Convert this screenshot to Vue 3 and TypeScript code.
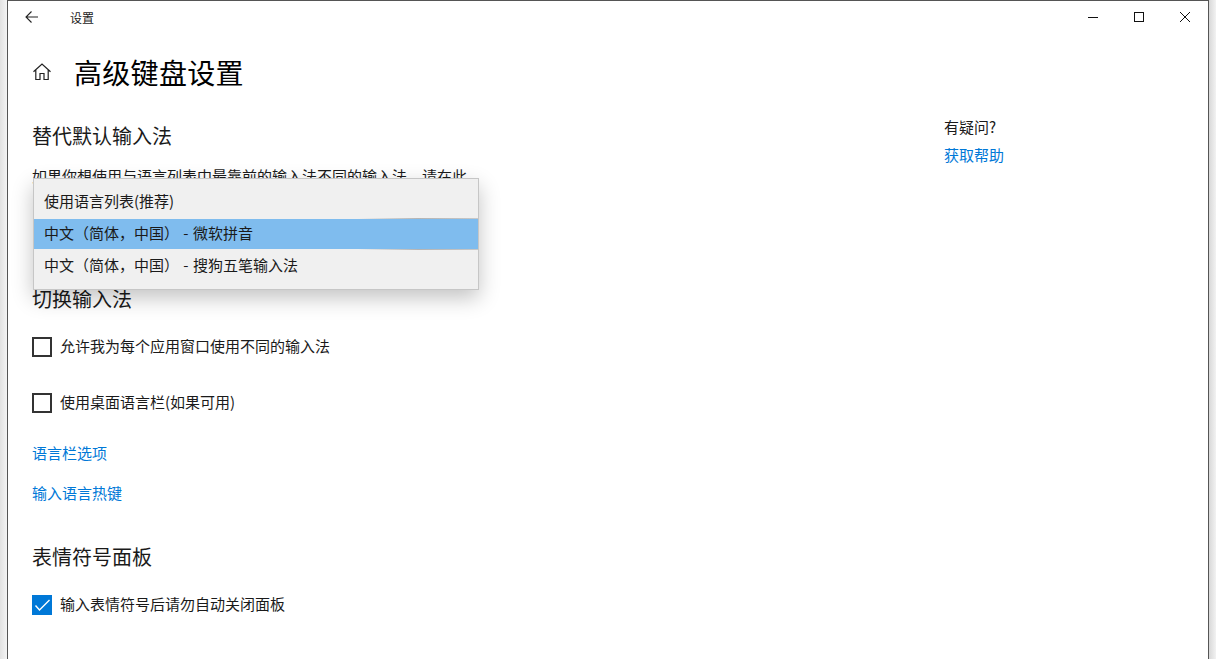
<script setup lang="ts">
const menuItems = [
  { label: '使用语言列表(推荐)', selected: false },
  { label: '中文（简体，中国） - 微软拼音', selected: true },
  { label: '中文（简体，中国） - 搜狗五笔输入法', selected: false },
];
</script>

<template>
  <div class="desktop">
    <div class="window">
      <header class="titlebar">
        <svg class="back" width="16" height="14" viewBox="0 0 16 14" fill="none" stroke="#222" stroke-width="1.1">
          <path d="M14 7H2M7.5 1.5 2 7l5.5 5.5" />
        </svg>
        <span class="titlebar__text">设置</span>
        <div class="controls">
          <svg width="46" height="34" viewBox="0 0 46 34" stroke="#111" fill="none"><path d="M18 16.5h10" /></svg>
          <svg width="46" height="34" viewBox="0 0 46 34" stroke="#111" fill="none"><rect x="18.5" y="11.5" width="9" height="9" /></svg>
          <svg width="46" height="34" viewBox="0 0 46 34" stroke="#111" fill="none"><path d="M18 11 28 21M28 11 18 21" /></svg>
        </div>
      </header>

      <div class="page-head">
        <svg class="home" width="20" height="20" viewBox="0 0 20 20" fill="none" stroke="#222" stroke-width="1.2">
          <path d="M1.5 9.8 10 2l8.5 7.8M3.8 8v9.5h4.2v-6h4v6h4.2V8" />
        </svg>
        <h1>高级键盘设置</h1>
      </div>

      <div class="columns">
        <main class="content">
          <h2>替代默认输入法</h2>
          <p class="desc">如果你想使用与语言列表中最靠前的输入法不同的输入法，请在此</p>
          <div class="select-spacer"></div>

          <h2 class="switch-title">切换输入法</h2>
          <label class="check">
            <span class="box"></span>
            <span class="check__text">允许我为每个应用窗口使用不同的输入法</span>
          </label>
          <label class="check check--second">
            <span class="box"></span>
            <span class="check__text">使用桌面语言栏(如果可用)</span>
          </label>
          <a class="link link--first">语言栏选项</a>
          <a class="link link--second">输入语言热键</a>

          <h2 class="emoji-title">表情符号面板</h2>
          <label class="check check--last">
            <span class="box box--on">
              <svg width="20" height="20" viewBox="0 0 20 20" fill="none" stroke="#fff" stroke-width="1.4">
                <path d="M3.5 10.5 7.5 15 17.5 5" />
              </svg>
            </span>
            <span class="check__text">输入表情符号后请勿自动关闭面板</span>
          </label>
        </main>

        <aside class="help">
          <div>有疑问?</div>
          <a class="link help__link">获取帮助</a>
        </aside>
      </div>

      <ul class="menu">
        <li v-for="item in menuItems" :key="item.label" :class="{ 'is-selected': item.selected }">
          {{ item.label }}
        </li>
      </ul>
    </div>
  </div>
</template>

<style>
html,
body {
  margin: 0;
  overflow: hidden;
}
</style>

<style scoped>
.desktop {
  width: 1216px;
  height: 659px;
  overflow: hidden;
  box-sizing: border-box;
  padding: 0 7px 0 7px;
  background: linear-gradient(90deg, #e2e2e2 0, #f4f4f4 7px, #f4f4f4 1209px, #d8d8d8 1209px, #f2f2f2 1216px);
  font-family: "Noto Sans CJK SC", "Liberation Sans", sans-serif;
  color: #1a1a1a;
}

.window {
  position: relative;
  box-sizing: border-box;
  width: 1202px;
  height: 659px;
  background: #fff;
  border: 1px solid #555;
  border-bottom: 0;
}

.titlebar {
  display: flex;
  align-items: center;
  height: 34px;
  padding-left: 16px;
}

.back {
  margin-top: -2px;
}

.titlebar__text {
  margin-left: 30px;
  font-size: 12px;
  line-height: 34px;
}

.controls {
  display: flex;
  margin-left: auto;
}

.controls svg {
  display: block;
}

.page-head {
  display: flex;
  align-items: center;
  height: 40px;
  margin-top: 17px;
  padding-left: 24px;
}

.page-head h1 {
  margin: 0 0 0 22px;
  font-size: 28px;
  font-weight: 400;
  line-height: 40px;
  letter-spacing: 0.3px;
  color: #000;
}

.columns {
  display: grid;
  grid-template-columns: 936px 1fr;
  margin-top: 0;
}

.content {
  padding-left: 24px;
}

h2 {
  margin: 0;
  font-size: 20px;
  font-weight: 400;
  line-height: 28px;
}

.content > h2:first-child {
  margin-top: 30px;
}

.desc {
  width: 440px;
  margin: 14px 0 0;
  font-size: 15px;
  line-height: 24px;
}

.select-spacer {
  height: 69px;
}

.switch-title {
  margin-top: 28px;
}

.check {
  display: flex;
  align-items: center;
  gap: 8px;
  height: 20px;
  font-size: 15px;
  line-height: 20px;
}

.check__text {
  margin-top: -2px;
}

.switch-title + .check {
  margin-top: 24px;
}

.check--second {
  margin-top: 36px;
}

.check--last {
  margin-top: 24px;
}

.box {
  box-sizing: border-box;
  flex: none;
  width: 20px;
  height: 20px;
  border: 2px solid #333;
}

.box--on {
  border: 0;
  background: #0078d7;
}

.box--on svg {
  display: block;
}

.link {
  display: block;
  color: #0078d7;
  font-size: 15px;
  line-height: 20px;
}

.link--first {
  margin-top: 30px;
}

.link--second {
  margin-top: 20px;
}

.emoji-title {
  margin-top: 40px;
}

.help {
  padding-top: 25px;
  font-size: 15px;
  line-height: 20px;
}

.help__link {
  margin-top: 8px;
}

.menu {
  position: absolute;
  left: 25px;
  top: 177px;
  box-sizing: border-box;
  width: 446px;
  height: 112px;
  margin: 0;
  padding: 6px 0;
  list-style: none;
  background: #f0f0f0;
  border: 1px solid #c6c6c6;
  box-shadow: 0 8px 20px rgba(0, 0, 0, 0.24);
  font-size: 15px;
  line-height: 30px;
  word-spacing: 1px;
}

.menu li {
  position: relative;
  height: 32px;
  padding-left: 10px;
}

.menu li:first-child {
  line-height: 32px;
}

.menu li.is-selected {
  height: 30px;
  margin: 2px 0 1px;
  background: #7fbcee;
  line-height: 28px;
}

.menu li.is-selected::before,
.menu li.is-selected::after {
  content: "";
  position: absolute;
  right: 0;
  width: 120px;
  height: 1px;
  background: linear-gradient(90deg, rgba(170, 170, 170, 0), #b4b4b4 50%, #c8c8c8);
}

.menu li.is-selected::before {
  top: -1px;
}

.menu li.is-selected::after {
  bottom: -1px;
}
</style>
